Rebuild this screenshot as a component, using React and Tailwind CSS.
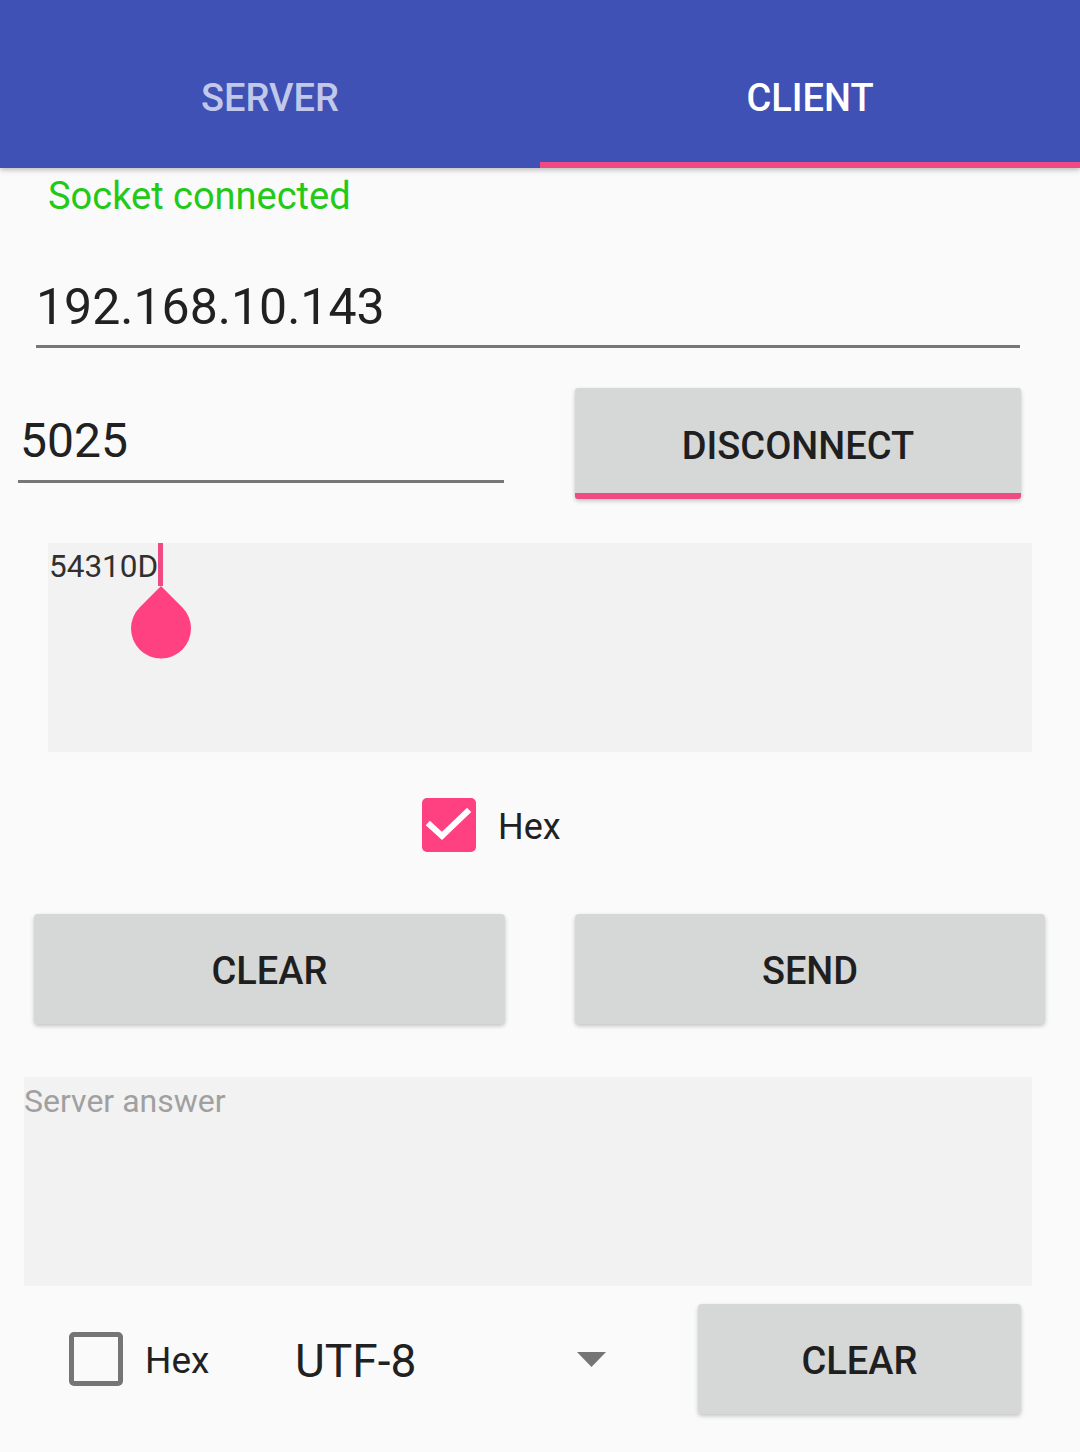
import React from "react";

const PINK = "#FF4081";

function GrayButton({ label, className = "" }) {
  return (
    <div
      className={`flex items-center justify-center pt-[4px] rounded-[4px] bg-[#D6D7D7] shadow-[0_2px_4px_rgba(0,0,0,0.22)] text-[38px] font-medium text-[#1f1f1f] ${className}`}
    >
      {label}
    </div>
  );
}

export default function App() {
  return (
    <div className="w-[1080px] h-[1452px] bg-[#FAFAFA] overflow-hidden font-['Roboto',sans-serif]">
      {/* Tabs */}
      <div className="relative z-10 h-[168px] bg-[#3F51B5] flex shadow-[0_2px_5px_rgba(0,0,0,0.25)]">
        <div className="flex-1 flex flex-col">
          <div className="flex-1 pt-[34px] flex items-center justify-center text-[38px] font-medium text-[#C2C8EA]">
            SERVER
          </div>
          <div className="h-[6px]" />
        </div>
        <div className="flex-1 flex flex-col">
          <div className="flex-1 pt-[34px] flex items-center justify-center text-[38px] font-medium text-white">
            CLIENT
          </div>
          <div className="h-[6px] bg-[#F04A85]" />
        </div>
      </div>

      {/* Status */}
      <div className="ml-[48px] mt-[6px] text-[38px] leading-[44px] text-[#22C916]">
        Socket connected
      </div>

      {/* IP field */}
      <div className="ml-[36px] w-[984px] mt-[61px]">
        <div className="text-[50px] leading-[56px] text-[#212121]">192.168.10.143</div>
        <div className="mt-[10px] h-[3px] bg-[#777777]" />
      </div>

      {/* Port + disconnect */}
      <div className="flex items-start mt-[40px]">
        <div className="ml-[18px] w-[486px]">
          <div className="mt-[25px] pl-[2px] text-[48px] leading-[56px] text-[#212121]">5025</div>
          <div className="mt-[11px] h-[3px] bg-[#777777]" />
        </div>
        <div className="ml-[71px] w-[446px] h-[111px] flex flex-col rounded-[3px] bg-[#D6D7D7] shadow-[0_2px_4px_rgba(0,0,0,0.22)] overflow-hidden">
          <div className="flex-1 pt-[12px] flex items-center justify-center text-[38px] font-medium text-[#1f1f1f]">
            DISCONNECT
          </div>
          <div className="h-[6px] bg-[#F04A85]" />
        </div>
      </div>

      {/* Message to send */}
      <div className="relative ml-[48px] mt-[44px] w-[984px] h-[209px] bg-[#F2F2F2]">
        <div className="pt-[6px] pl-[1px] text-[31.5px] leading-[36px] text-[#303030]">54310D</div>
        <div className="absolute left-[110px] top-0 w-[5px] h-[43px] bg-[#F04A85]" />
        <svg className="absolute left-[83px] top-[43px]" width="60" height="73" viewBox="0 0 60 73">
          <path d="M30 0 L51.2 21.2 A30 30 0 1 1 8.8 21.2 Z" fill={PINK} />
        </svg>
      </div>

      {/* Hex checkbox */}
      <div className="flex items-center ml-[422px] mt-[46px]">
        <div className="w-[54px] h-[54px] rounded-[5px] bg-[#FF4081] flex items-center justify-center">
          <svg width="54" height="54" viewBox="0 0 54 54">
            <path d="M8 27 L20 38 L45 14" fill="none" stroke="white" strokeWidth="6" strokeLinecap="square" />
          </svg>
        </div>
        <div className="ml-[22px] pt-[4px] text-[36px] leading-[44px] text-[#212121]">Hex</div>
      </div>

      {/* Clear / Send */}
      <div className="flex mt-[62px]">
        <GrayButton label="CLEAR" className="ml-[34px] w-[471px] h-[110px]" />
        <GrayButton label="SEND" className="ml-[70px] w-[470px] h-[110px]" />
      </div>

      {/* Server answer */}
      <div className="ml-[24px] mt-[53px] w-[1008px] h-[209px] bg-[#F2F2F2]">
        <div className="pt-[6px] text-[32px] leading-[36px] text-[#A0A0A0]">Server answer</div>
      </div>

      {/* Bottom row */}
      <div className="flex items-center mt-[18px]">
        <div className="ml-[69px] w-[54px] h-[54px] rounded-[5px] border-[5px] border-[#757575]" />
        <div className="ml-[22px] w-[150px] pt-[4px] text-[37px] leading-[44px] text-[#212121]">Hex</div>
        <div className="w-[282px] pt-[4px] text-[46px] leading-[56px] text-[#212121]">UTF-8</div>
        <svg width="29" height="15" viewBox="0 0 29 15">
          <path d="M0 0 H29 L14.5 15 Z" fill="#757575" />
        </svg>
        <GrayButton label="CLEAR" className="ml-[92px] w-[323px] h-[110px]" />
      </div>
    </div>
  );
}
